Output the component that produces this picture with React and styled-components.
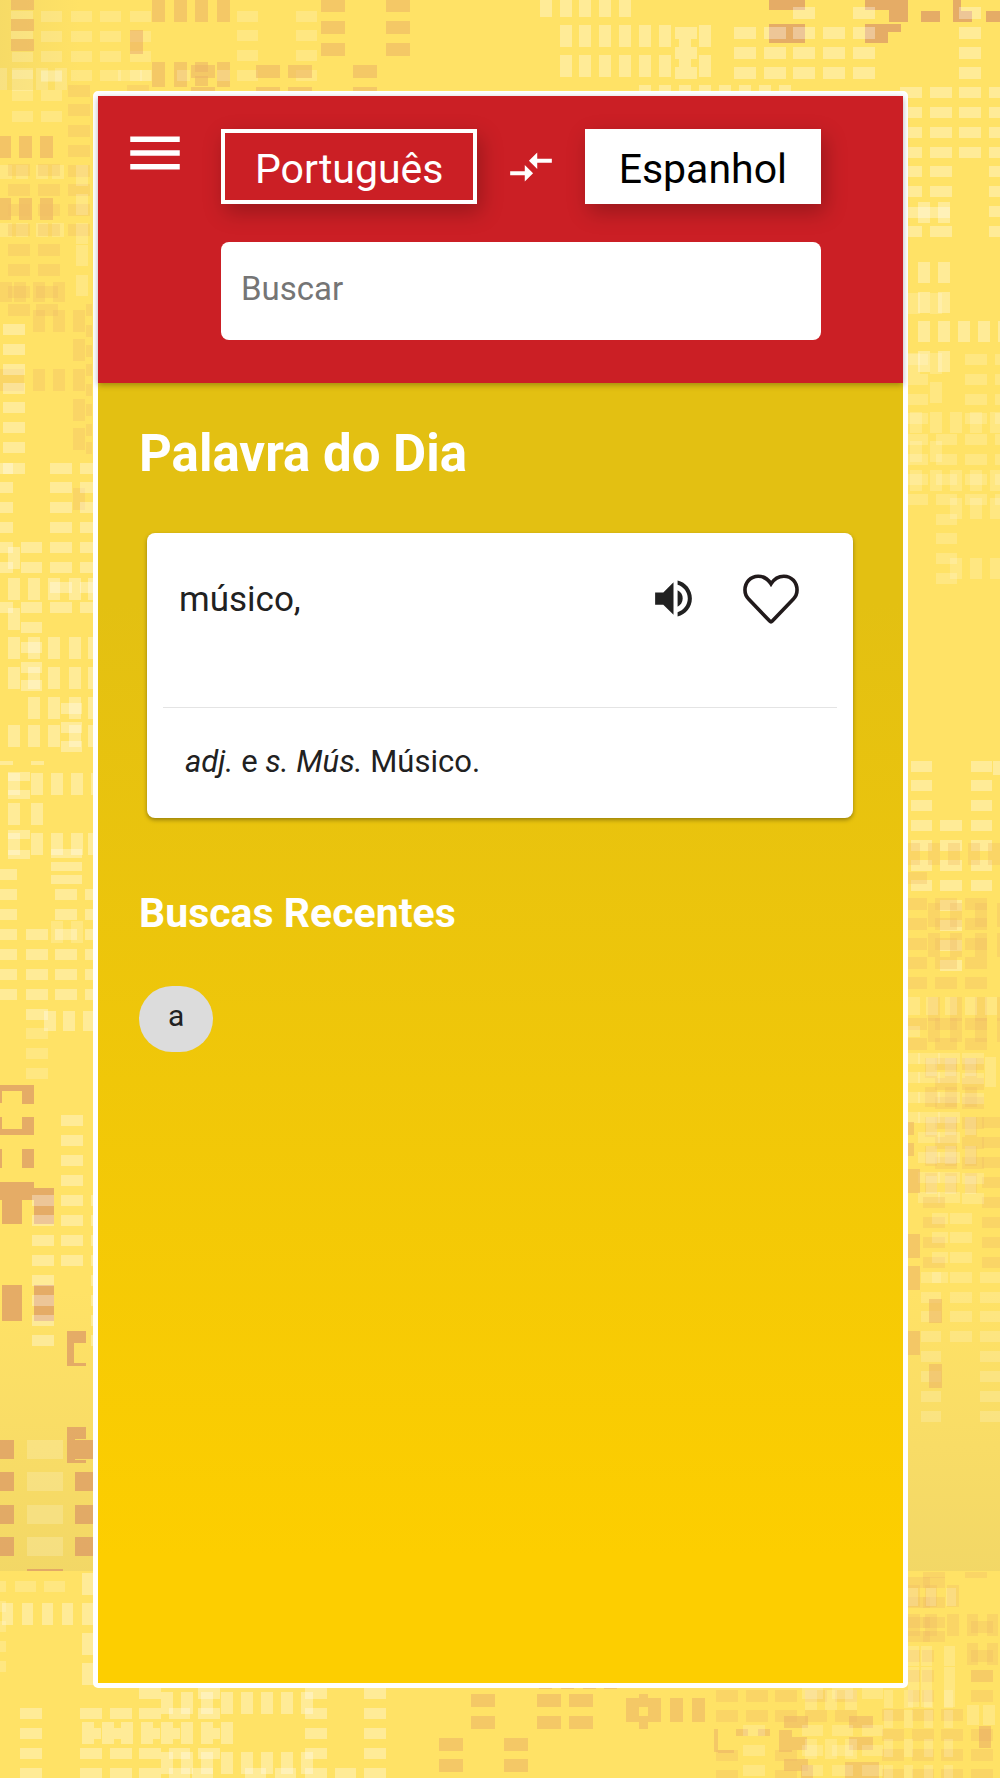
import React, { useState } from "react"
import styled, { createGlobalStyle, css } from "styled-components"
import { MdCompareArrows, MdMenu, MdVolumeUp } from "react-icons/md"

const GlobalStyle = createGlobalStyle`
  * {
    box-sizing: border-box;
  }

  body {
    margin: 0;
    background: #ffe266;
    font-family: Roboto, "Liberation Sans", sans-serif;
  }

  button,
  input {
    font-family: inherit;
  }
`

const Page = styled.div`
  display: grid;
  min-height: 100vh;
  overflow: hidden;
`

const Backdrop = styled.svg`
  grid-area: 1 / 1;
  display: block;
  width: 100%;
  height: 100%;
`

const Frame = styled.main`
  grid-area: 1 / 1;
  z-index: 1;
  display: flex;
  flex-direction: column;
  margin: 91px 92px 90px 93px;
  border: 5px solid #fff;
  border-radius: 5px;
  background: linear-gradient(#e3c012 15%, #e3c012 32%, #fdce00 92%);
`

const Header = styled.header`
  display: flex;
  align-items: flex-start;
  gap: 33px;
  padding: 33px 82px 43px 24px;
  background: #cb1f25;
  box-shadow: 0 2px 6px rgba(0, 0, 0, 0.3);
`

const IconButton = styled.button`
  display: flex;
  align-items: center;
  justify-content: center;
  flex: none;
  padding: 0;
  border: 0;
  background: none;
  color: ${props => props.color};
  cursor: pointer;
`

const MenuButton = styled(IconButton)`
  margin-top: -9px;
`

const SearchArea = styled.div`
  flex: 1;
  min-width: 0;
`

const Languages = styled.div`
  display: flex;
  align-items: center;
  justify-content: space-between;
  margin-bottom: 38px;
`

const LanguageButton = styled.button`
  height: 75px;
  padding: 4px 30px 0;
  border: 4px solid #fff;
  font-size: 41px;
  line-height: 50px;
  box-shadow: 4px 8px 20px rgba(0, 0, 0, 0.25);
  cursor: pointer;

  ${props =>
    props.$filled
      ? css`
          background: #fff;
          color: #000;
        `
      : css`
          background: #cb1f25;
          color: #fff;
        `}
`

const SearchInput = styled.input`
  display: block;
  width: 100%;
  height: 98px;
  padding: 0 20px 6px;
  border: 0;
  border-radius: 8px;
  background: #fff;
  color: #212121;
  font-size: 33px;

  &::placeholder {
    color: #757575;
    opacity: 1;
  }
`

const Content = styled.div`
  flex: 1;
  padding: 41px 50px 40px 41px;
`

const Title = styled.h1`
  margin: 0 0 49px;
  color: #fff;
  font-size: 51px;
  font-weight: 700;
  line-height: 60px;
`

const Subtitle = styled.h2`
  margin: 70px 0 48px;
  color: #fff;
  font-size: 41px;
  font-weight: 700;
  line-height: 50px;
`

const Card = styled.article`
  margin-left: 8px;
  padding: 0 16px;
  border-radius: 8px;
  background: #fff;
  color: #212121;
  box-shadow: 0 2px 4px rgba(0, 0, 0, 0.35);
`

const CardTop = styled.div`
  display: flex;
  align-items: flex-start;
  gap: 44px;
  height: 175px;
  padding: 36px 37px 0 16px;
  border-bottom: 1px solid #e4e4e4;
`

const Word = styled.h3`
  flex: 1;
  margin: 0;
  font-size: 35px;
  font-weight: 400;
  line-height: 62px;
`

const CardIcon = styled(IconButton)`
  height: 59px;
`

const Definition = styled.p`
  margin: 0;
  padding: 32px 22px 34px;
  font-size: 31px;
  line-height: 44px;
`

const Chip = styled.button`
  height: 66px;
  padding: 0 29px 8px;
  border: 0;
  border-radius: 33px;
  background: #dcdcdc;
  color: #212121;
  font-size: 30px;
  cursor: pointer;
`

const tones = {
  light: ["#fff", 0.32],
  soft: ["#fff", 0.18],
  sand: ["#eebb66", 0.32],
  tan: ["#e9b066", 0.52],
  pink: ["#e39a66", 0.42],
  orange: ["#db9766", 0.72],
}

// each row: tone, x positions, y positions, block width, block height
const blocks = [
  // top left
  ["pink", [11], [0], 23, 10],
  ["pink", [11], [19, 39], 23, 12],
  ["soft", [11], [11, 31], 22, 8],
  ["soft", [12], [52, 70], 21, 10],
  ["soft", [41, 71, 100, 130], [11, 31, 51, 70], 21, 11],
  ["pink", [130], [30], 13, 24],
  ["soft", [118, 130, 140], [70], 12, 11],
  ["tan", [152, 174, 195, 217], [0], 13, 22],
  ["tan", [152, 174, 217], [62], 13, 25],
  ["tan", [191], [65], 24, 13],
  ["tan", [195], [62, 76], 13, 10],
  ["soft", [177, 217], [70], 13, 11],
  ["soft", [237, 296], [11, 30, 50, 70], 21, 11],
  ["tan", [321, 386], [0], 24, 12],
  ["tan", [321, 386], [21, 43], 24, 13],
  ["tan", [256, 288, 353], [65], 24, 13],
  ["tan", [191, 256, 288, 353], [87], 24, 4],
  ["sand", [127], [85], 22, 6],
  ["soft", [0], [68], 7, 22],
  ["soft", [12], [68, 80, 90, 111], 21, 11],
  ["soft", [36], [68], 12, 22],
  ["soft", [55], [68], 12, 22],
  ["soft", [41], [71, 90, 111], 21, 11],

  // top right
  ["light", [540, 560, 579, 599, 619], [0], 12, 17],
  ["light", [560, 579, 599, 619, 639, 659, 699], [25, 55], 12, 22],
  ["light", [675], [27, 47, 67], 22, 12],
  ["light", [679], [39, 59], 12, 8],
  ["light", [639, 659, 679, 699, 719, 739, 759, 779], [85], 12, 6],
  ["orange", [769], [0], 36, 10],
  ["orange", [769], [24], 36, 19],
  ["orange", [865], [0], 43, 10],
  ["orange", [889], [10], 19, 12],
  ["orange", [921, 953], [11], 19, 11],
  ["orange", [953], [0], 8, 11],
  ["orange", [986], [11], 14, 11],
  ["orange", [865], [24], 36, 8],
  ["orange", [865], [32], 23, 11],
  ["light", [734, 764, 793, 823, 853], [27, 47, 67], 22, 12],
  ["light", [793, 853], [7], 22, 12],
  ["light", [959], [7, 27, 47, 67], 22, 12],
  ["light", [900, 930, 959, 989], [87, 107, 127, 147], 22, 11],
  ["light", [900, 930, 989], [166, 186, 226], 22, 11],
  ["light", [989], [206], 22, 11],
  ["light", [908], [207], 42, 11],
  ["light", [918, 938], [202, 262, 292, 321, 351], 12, 21],
  ["light", [958, 978, 998], [321], 12, 21],
  ["soft", [908, 930], [293, 353], 12, 21],

  // left side
  ["sand", [68], [85, 104, 125, 145, 165, 184, 204, 224], 22, 12],
  ["pink", [0], [136, 198], 11, 22],
  ["pink", [19, 40], [136, 198], 13, 22],
  ["soft", [0, 16, 36, 52], [165, 223], 12, 14],
  ["soft", [76], [165, 194, 223, 245, 275], 12, 21],
  ["sand", [8, 38], [164, 184, 204, 224, 244, 264], 22, 12],
  ["sand", [0, 14, 33, 53], [282], 12, 20],
  ["sand", [8, 36], [286, 304], 22, 12],
  ["sand", [33, 53], [310, 369], 12, 22],
  ["sand", [0, 12], [369], 12, 22],
  ["sand", [73], [310, 339, 369, 399, 428, 488], 12, 22],
  ["sand", [86], [304, 325, 345, 364, 384, 404, 424, 442], 6, 12],
  ["light", [3], [324, 344, 364, 383, 402, 422, 442, 463], 22, 11],
  ["light", [0], [463, 482, 502, 522, 542, 562, 602], 13, 11],
  ["light", [50, 80], [463, 482, 502, 522, 542, 562, 582, 602], 22, 11],
  ["light", [21], [542, 562, 602, 622, 642, 662, 680], 21, 11],
  ["light", [8], [547, 578, 608, 637, 667, 725], 12, 22],
  ["light", [28], [578, 637, 667, 697, 725], 12, 22],
  ["light", [48, 69, 88], [578, 637, 667, 697, 725], 12, 22],
  ["light", [61], [703, 722, 741], 21, 11],
  ["light", [0, 31], [761], 13, 4],
  ["light", [8, 31, 51, 71, 91], [773], 12, 22],
  ["light", [8, 31], [803, 833], 12, 22],
  ["light", [8], [772, 790, 830, 850], 22, 9],
  ["light", [51, 71, 88], [833], 12, 22],
  ["light", [51], [849, 862, 875], 31, 9],
  ["light", [0], [869, 889, 909, 929, 949, 969, 989], 17, 11],
  ["light", [26], [929, 949, 969, 989, 1009], 22, 11],
  ["light", [55, 85], [889, 909, 929, 949, 969, 989], 22, 11],
  ["soft", [51, 71], [921], 12, 22],
  ["light", [44, 63, 83], [1011], 12, 20],

  // lower left
  ["soft", [26], [1028, 1048, 1068], 22, 11],
  ["orange", [0], [1085, 1129], 34, 6],
  ["orange", [22], [1091], 12, 13],
  ["orange", [0], [1091, 1117], 2, 12],
  ["orange", [22], [1117], 12, 12],
  ["orange", [0], [1149], 2, 19],
  ["orange", [22], [1149], 12, 19],
  ["orange", [0], [1182], 34, 6],
  ["orange", [22], [1188], 12, 12],
  ["orange", [0], [1188], 2, 12],
  ["orange", [2, 34], [1188, 1285], 20, 36],
  ["orange", [67], [1331, 1427], 19, 12],
  ["orange", [67], [1343], 7, 23],
  ["orange", [74], [1363], 12, 3],
  ["orange", [67], [1439], 8, 24],
  ["orange", [75], [1460], 11, 3],
  ["orange", [0], [1440, 1472, 1505, 1537], 14, 19],
  ["orange", [75], [1440, 1472, 1505, 1537], 19, 19],
  ["orange", [27], [1569], 36, 2],
  ["soft", [27], [1440, 1472, 1505, 1537], 36, 19],
  ["light", [61], [1115, 1135, 1155, 1175, 1195, 1215, 1235, 1255], 22, 11],
  ["light", [32, 91], [1195, 1215, 1235, 1255, 1275, 1295, 1315, 1335], 22, 11],
  ["soft", [15, 44], [1581], 21, 11],
  ["light", [2, 22, 42, 62], [1603], 11, 22],
  ["light", [82], [1573, 1603, 1633, 1663], 12, 22],
  ["soft", [0], [1581, 1601, 1621, 1641, 1661], 6, 11],

  // bottom left
  ["light", [20, 80, 110], [1708, 1748, 1768], 22, 11],
  ["light", [20], [1728], 22, 11],
  ["light", [139], [1688, 1708, 1748, 1768], 22, 11],
  ["light", [82, 102, 121, 141, 161, 181, 201, 221], [1722], 12, 22],
  ["light", [161, 181, 201, 221, 241, 261, 281, 301], [1692, 1752], 12, 22],
  ["light", [94, 114, 153, 173, 213], [1728], 7, 11],
  ["light", [198], [1688, 1708, 1748], 22, 11],
  ["light", [169], [1708, 1748, 1768], 21, 11],
  ["light", [305, 364], [1688, 1708, 1728, 1748, 1768], 22, 11],
  ["light", [192, 245, 275, 335], [1768], 21, 11],

  // bottom right
  ["tan", [471, 537, 569], [1694, 1716], 24, 13],
  ["tan", [439, 504], [1738, 1759], 24, 13],
  ["tan", [626, 648], [1698], 13, 24],
  ["tan", [639], [1694], 9, 13],
  ["tan", [639], [1716], 9, 13],
  ["tan", [670, 692], [1698], 13, 24],
  ["tan", [539, 561, 583, 604], [1687], 13, 2],
  ["sand", [716, 746, 775, 805, 835], [1690, 1710], 22, 12],
  ["sand", [716, 775], [1750, 1770], 22, 11],
  ["sand", [882, 912, 941], [1709, 1729, 1749, 1769], 22, 12],
  ["sand", [971], [1670, 1690, 1729, 1749, 1769], 22, 12],
  ["tan", [714], [1729], 4, 23],
  ["tan", [736], [1729], 12, 7],
  ["tan", [718], [1750], 16, 3],
  ["tan", [758], [1729], 12, 7],
  ["tan", [779], [1730], 13, 22],
  ["tan", [792], [1737], 15, 13],
  ["tan", [784, 849], [1716], 24, 12],
  ["tan", [849], [1737], 24, 13],
  ["tan", [784], [1759], 24, 12],
  ["tan", [845], [1762], 34, 16],
  ["tan", [801], [1765], 12, 13],
  ["pink", [979], [1726], 12, 22],
  ["soft", [743], [1725, 1745, 1765], 22, 11],
  ["soft", [802, 832, 862], [1688, 1725, 1745, 1765], 21, 11],
  ["soft", [805, 825, 845], [1690, 1739], 12, 20],
  ["soft", [884, 904, 924, 944], [1690, 1710, 1739, 1765], 9, 18],
  ["soft", [967, 983], [1705], 12, 20],

  // right side
  ["soft", [908], [354, 374, 394, 413, 434, 454, 474, 494], 20, 11],
  ["soft", [965, 995], [354, 374, 394, 413, 434, 454, 474, 494], 22, 11],
  ["soft", [930], [382, 412, 441, 470], 12, 21],
  ["soft", [950], [412, 470, 498, 558], 12, 21],
  ["soft", [970, 990], [412, 470, 498, 558], 12, 21],
  ["soft", [910], [412, 441, 470], 12, 21],
  ["soft", [936], [434, 454, 474, 494, 514, 533, 553, 573], 21, 11],
  ["light", [911, 971], [761, 780, 800, 820, 840, 860, 880], 21, 11],
  ["light", [993], [761], 7, 14],
  ["light", [940], [820, 840, 860, 880, 900, 920, 940, 960], 22, 11],
  ["sand", [908, 928, 948, 968, 988], [843], 12, 22],
  ["sand", [908], [872, 898, 918, 938, 957, 977, 1018, 1038], 19, 12],
  ["sand", [935, 965], [898, 918, 938, 957, 977, 1018, 1038], 22, 12],
  ["sand", [928, 950, 975, 997], [903, 933, 997, 1018], 12, 24],
  ["soft", [908, 926, 945, 965, 985], [997], 12, 18],
  ["soft", [908], [1026, 1053, 1072, 1092, 1112], 12, 11],
  ["sand", [925, 945, 965], [1058, 1087, 1117, 1146, 1173], 12, 20],
  ["sand", [935, 962], [1058, 1078, 1097, 1117, 1137, 1157], 22, 12],
  ["sand", [982], [1117, 1137, 1157, 1177, 1197, 1217, 1237, 1257], 22, 11],
  ["soft", [926, 945, 965], [1058, 1117, 1146, 1176], 11, 18],
  ["soft", [918, 938], [1053, 1072, 1092, 1112, 1132, 1152, 1172, 1192], 22, 11],
  ["soft", [985], [1057], 11, 30],
  ["soft", [962], [1053, 1073, 1093, 1173, 1193], 22, 11],
  ["tan", [908], [1122, 1143], 6, 13],
  ["tan", [908], [1169, 1234, 1266, 1331], 12, 24],
  ["sand", [923], [1197, 1217, 1237, 1257], 22, 11],
  ["soft", [950], [1213, 1232, 1252, 1272, 1292, 1311, 1331], 22, 11],
  ["soft", [932], [1213, 1232, 1252, 1272], 16, 11],
  ["soft", [921, 980], [1272, 1292, 1311, 1331, 1351, 1371, 1391, 1411], 20, 11],
  ["tan", [929], [1299, 1364], 13, 24],
  ["sand", [923, 965], [1572], 22, 6],
  ["sand", [908, 925, 947], [1585, 1614], 12, 22],
  ["sand", [908, 923], [1577, 1597, 1617, 1631], 22, 11],
  ["soft", [908, 926, 946], [1588], 10, 18],
  ["sand", [967, 987], [1614, 1643], 11, 22],
  ["sand", [971], [1621, 1650, 1670], 22, 12],
  ["sand", [908, 922], [1650, 1670, 1690], 12, 12],
  ["soft", [908, 921, 944], [1646, 1667, 1687], 11, 20],
]

function CityBackdrop() {
  return (
    <Backdrop
      viewBox="0 0 1000 1778"
      preserveAspectRatio="xMidYMid slice"
      aria-hidden="true"
    >
      <defs>
        <linearGradient id="dusk" x1="0" y1="0" x2="0" y2="1">
          <stop offset="0" stopColor="#dcc466" stopOpacity="0" />
          <stop offset="1" stopColor="#dcc466" stopOpacity="0.36" />
        </linearGradient>
        <linearGradient id="corner" x1="0" y1="0" x2="1" y2="0">
          <stop offset="0" stopColor="#dcc466" stopOpacity="0.25" />
          <stop offset="1" stopColor="#dcc466" stopOpacity="0" />
        </linearGradient>
      </defs>
      <rect width="1000" height="1778" fill="#ffe266" />
      <rect y="1290" width="1000" height="281" fill="url(#dusk)" />
      <rect width="80" height="90" fill="url(#corner)" />
      {blocks.map(([tone, xs, ys, width, height], i) => (
        <g key={i} fill={tones[tone][0]} fillOpacity={tones[tone][1]}>
          {xs.map(x =>
            ys.map(y => (
              <rect key={`${x}-${y}`} x={x} y={y} width={width} height={height} />
            ))
          )}
        </g>
      ))}
    </Backdrop>
  )
}

const HeartIcon = ({ filled }) => (
  <svg width="58" height="52" viewBox="787 219 176 156" aria-hidden="true">
    <path
      d="M875 251C866 237 852 228 836 228C813 228 796 247 796 270C796 281 801 291 807 297L871 364Q875 368 879 364L943 297C949 291 954 281 954 270C954 247 938 228 914 228C898 228 884 237 875 251Z"
      fill={filled ? "#211a1b" : "none"}
      stroke="#211a1b"
      strokeWidth="11"
    />
  </svg>
)

const App = () => {
  const [langs, setLangs] = useState(["Português", "Espanhol"])
  const [query, setQuery] = useState("")
  const [liked, setLiked] = useState(false)
  const recent = ["a"]

  return (
    <Page>
      <GlobalStyle />
      <CityBackdrop />
      <Frame>
        <Header>
          <MenuButton type="button" color="#fff" aria-label="Menu">
            <MdMenu size={66} />
          </MenuButton>
          <SearchArea>
            <Languages>
              <LanguageButton type="button">{langs[0]}</LanguageButton>
              <IconButton
                type="button"
                color="#fff"
                aria-label="Inverter idiomas"
                onClick={() => setLangs([langs[1], langs[0]])}
              >
                <MdCompareArrows size={50} />
              </IconButton>
              <LanguageButton type="button" $filled>
                {langs[1]}
              </LanguageButton>
            </Languages>
            <SearchInput
              type="text"
              aria-label="Buscar"
              placeholder="Buscar"
              value={query}
              onChange={e => setQuery(e.target.value)}
            />
          </SearchArea>
        </Header>

        <Content>
          <Title>Palavra do Dia</Title>
          <Card>
            <CardTop>
              <Word>músico,</Word>
              <CardIcon type="button" color="#212121" aria-label="Ouvir">
                <MdVolumeUp size={49} />
              </CardIcon>
              <CardIcon
                type="button"
                color="#212121"
                aria-label="Favoritar"
                aria-pressed={liked}
                onClick={() => setLiked(!liked)}
              >
                <HeartIcon filled={liked} />
              </CardIcon>
            </CardTop>
            <Definition>
              <em>adj.</em> e <em>s. Mús.</em> Músico.
            </Definition>
          </Card>

          <Subtitle>Buscas Recentes</Subtitle>
          {recent.map(term => (
            <Chip key={term} type="button" onClick={() => setQuery(term)}>
              {term}
            </Chip>
          ))}
        </Content>
      </Frame>
    </Page>
  )
}

export default App
